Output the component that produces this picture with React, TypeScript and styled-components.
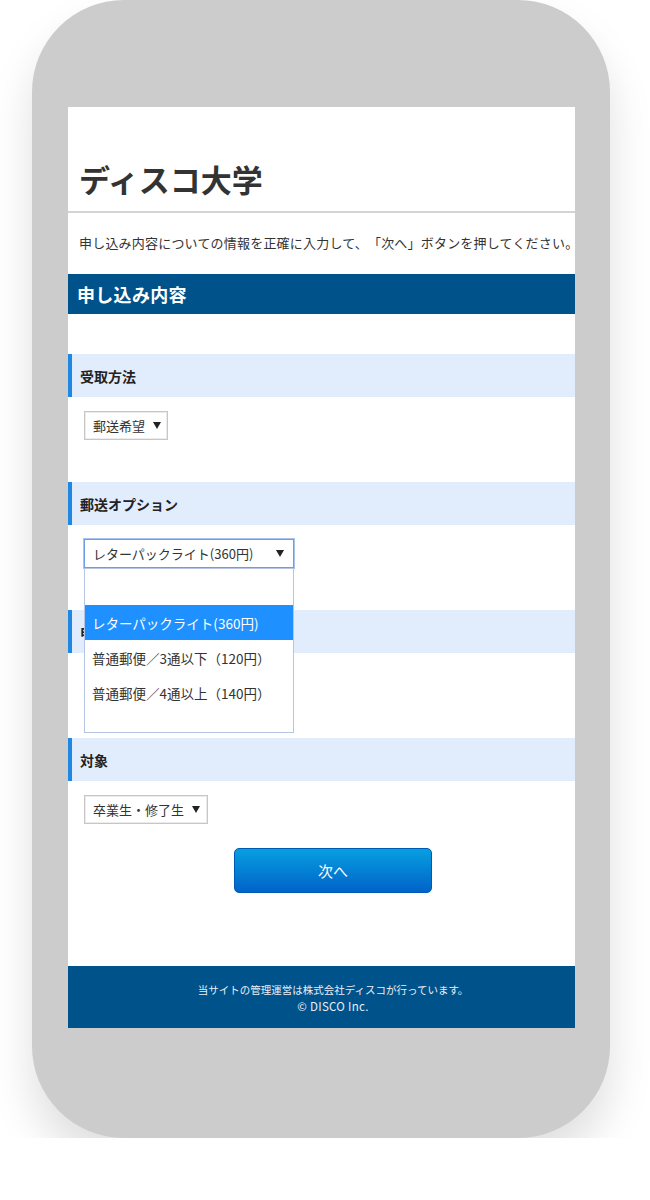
import React from "react";
import styled, { createGlobalStyle } from "styled-components";

const GlobalStyle = createGlobalStyle`
    html, body {
        margin: 0;
        padding: 0;
        background: #ffffff;
    }
    body {
        font-family: "Noto Sans CJK JP", "Noto Sans", sans-serif;
        color: #333333;
        text-spacing-trim: space-all;
    }
`;

const Phone = styled.div`
    box-sizing: border-box;
    width: 578px;
    height: 1138px;
    margin-left: 32px;
    padding: 107px 35px 0 36px;
    background: #cccccc;
    border-radius: 92px;
    box-shadow: 0 26px 44px rgba(0, 0, 0, 0.13);
`;

const Screen = styled.div`
    position: relative;
    height: 921px;
    background: #ffffff;
    overflow: hidden;
`;

const Page = styled.div`
    width: 530px;
`;

const Header = styled.header`
    padding: 52px 0 12px 11px;
    border-bottom: 2px solid #d4d4d4;

    h1 {
        margin: 0;
        font-size: 31px;
        line-height: 40px;
        font-weight: 700;
        color: #333333;
    }
`;

const Lead = styled.p`
    margin: 20px 0 21px 11px;
    font-size: 13px;
    line-height: 20px;
    letter-spacing: 0.2px;
    white-space: nowrap;
    color: #333333;
`;

const TitleBar = styled.h2`
    margin: 0;
    height: 40px;
    padding-left: 9px;
    display: flex;
    align-items: center;
    background: #00528b;
    color: #ffffff;
    font-size: 18px;
    font-weight: 700;
    letter-spacing: 0.3px;
`;

const Form = styled.div`
    padding-top: 40px;
`;

const Section = styled.section`
    margin-bottom: 42px;
`;

const SectionHead = styled.h3`
    margin: 0;
    height: 43px;
    padding-left: 8px;
    display: flex;
    align-items: center;
    background: #e1edfd;
    border-left: 4px solid #1e88e5;
    font-size: 14px;
    font-weight: 700;
    color: #222222;
`;

const SelectWrap = styled.div`
    position: relative;
    display: inline-block;
    margin: 14px 0 0 16px;
`;

const Select = styled.div<{ $width: number; $focused?: boolean }>`
    box-sizing: border-box;
    width: ${(p) => p.$width}px;
    height: 29px;
    padding: 0 9px 0 8px;
    display: flex;
    align-items: center;
    justify-content: space-between;
    background: #ffffff;
    border: 1px solid ${(p) => (p.$focused ? "#6f9be6" : "#c6c6c6")};
    box-shadow: ${(p) => (p.$focused ? "0 0 0 1px #a9c3f0" : "inset 0 0 0 1px #ececec")};
    font-size: 13px;
    color: #333333;
    white-space: nowrap;

    &::after {
        content: "";
        border-left: 4px solid transparent;
        border-right: 4px solid transparent;
        border-top: 7px solid #222222;
        margin-left: 8px;
    }
`;

const Dropdown = styled.ul`
    position: absolute;
    top: 100%;
    left: 0;
    z-index: 2;
    box-sizing: border-box;
    width: 210px;
    height: 165px;
    margin: 0;
    padding: 36px 0 0;
    list-style: none;
    background: #ffffff;
    border: 1px solid #b6c5e3;
`;

const Option = styled.li<{ $active?: boolean }>`
    height: 35px;
    padding-left: 7px;
    display: flex;
    align-items: center;
    font-size: 13.5px;
    white-space: nowrap;
    background: ${(p) => (p.$active ? "#1e90ff" : "transparent")};
    color: ${(p) => (p.$active ? "#ffffff" : "#333333")};
`;

const NextButton = styled.button`
    display: block;
    width: 198px;
    height: 45px;
    margin: -18px auto 0;
    border: 1px solid #0059b5;
    border-radius: 5px;
    background: linear-gradient(#079fe0, #0063c9);
    color: #ffffff;
    font-family: "Noto Sans CJK JP", sans-serif;
    font-size: 15px;
`;

const Footer = styled.footer`
    margin-top: 73px;
    height: 62px;
    box-sizing: border-box;
    padding-top: 15px;
    background: #00528b;
    color: #e9eff6;
    text-align: center;
    font-size: 10.5px;
    line-height: 17px;

    p {
        margin: 0;
    }
`;

const Copyright = styled.p`
    font-size: 11.5px;
    letter-spacing: 0.3px;
`;

const sections = [
    { title: "受取方法", value: "郵送希望", width: 84 },
    { title: "郵送オプション", value: "レターパックライト(360円)", width: 210, open: true },
    { title: "申請部数", value: "1部", width: 60 },
    { title: "対象", value: "卒業生・修了生", width: 124 },
];

const options = [
    "レターパックライト(360円)",
    "普通郵便／3通以下（120円）",
    "普通郵便／4通以上（140円）",
];

const App = () => {
    return (
        <>
            <GlobalStyle />
            <Phone>
                <Screen>
                    <Page>
                        <Header>
                            <h1>ディスコ大学</h1>
                        </Header>
                        <Lead>
                            申し込み内容についての情報を正確に入力して、「次へ」ボタンを押してください。
                        </Lead>
                        <TitleBar>申し込み内容</TitleBar>
                        <Form>
                            {sections.map((item, index) => (
                                <Section key={index}>
                                    <SectionHead>{item.title}</SectionHead>
                                    <SelectWrap>
                                        <Select $width={item.width} $focused={item.open}>
                                            {item.value}
                                        </Select>
                                        {item.open && (
                                            <Dropdown>
                                                {options.map((opt, i) => (
                                                    <Option key={i} $active={i === 0}>
                                                        {opt}
                                                    </Option>
                                                ))}
                                            </Dropdown>
                                        )}
                                    </SelectWrap>
                                </Section>
                            ))}
                            <NextButton>次へ</NextButton>
                        </Form>
                        <Footer>
                            <p>当サイトの管理運営は株式会社ディスコが行っています。</p>
                            <Copyright>© DISCO Inc.</Copyright>
                        </Footer>
                    </Page>
                </Screen>
            </Phone>
        </>
    );
};

export default App;
